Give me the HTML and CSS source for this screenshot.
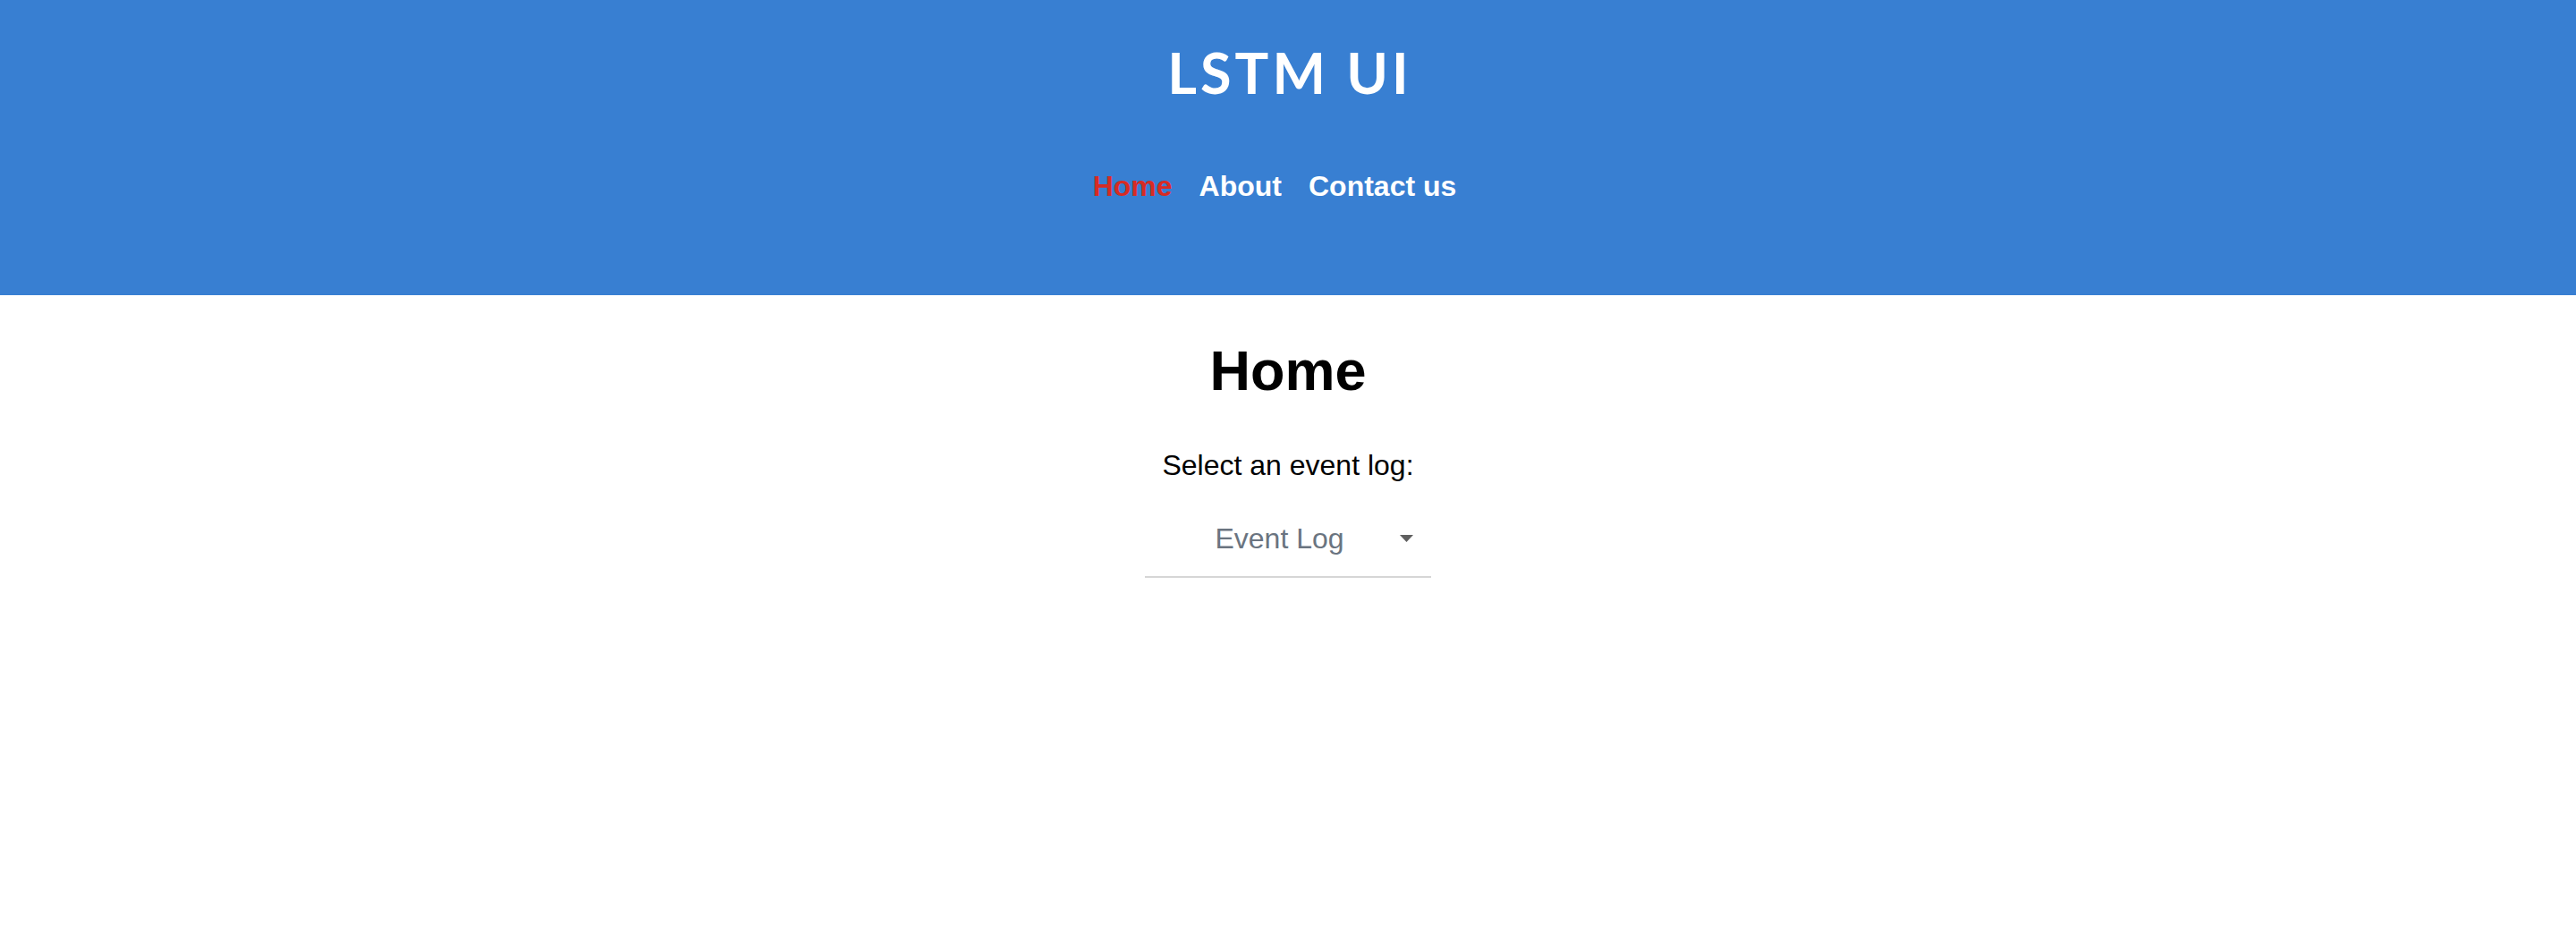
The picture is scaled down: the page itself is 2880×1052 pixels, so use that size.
FILE: index.html
```html
<!DOCTYPE html>
<html lang="en">
<head>
<meta charset="utf-8">
<title>LSTM UI</title>
<link rel="stylesheet" href="styles.css">
</head>
<body>
<header class="site-header">
  <h1 class="site-title">LSTM UI</h1>
  <nav class="site-nav">
    <a class="nav-link active" href="#">Home</a>
    <a class="nav-link" href="#">About</a>
    <a class="nav-link" href="#">Contact us</a>
  </nav>
</header>
<main class="page">
  <h2 class="page-title">Home</h2>
  <p class="select-label">Select an event log:</p>
  <div class="select">
    <span class="select-value">Event Log</span>
    <svg class="select-arrow" width="15" height="8" viewBox="0 0 15 8"><path d="M0 0H15L7.5 8Z" fill="#5f5f5f"/></svg>
  </div>
</main>
</body>
</html>
```
FILE: styles.css
```css
html, body {
  margin: 0;
  padding: 0;
  background: #ffffff;
}
body {
  font-family: "Liberation Sans", Arial, sans-serif;
  color: #000;
}
.site-header {
  background: #387fd2;
  height: 330px;
  box-sizing: border-box;
  padding-top: 43px;
  display: flex;
  flex-direction: column;
  align-items: center;
}
.site-title {
  margin: 0;
  font-family: Lato, "DejaVu Sans", sans-serif;
  font-weight: 700;
  font-size: 63px;
  line-height: 1.2;
  color: #ffffff;
  letter-spacing: 4px;
  padding-left: 4px;
}
.site-nav {
  margin-top: 71px;
  display: flex;
}
.nav-link {
  font-family: "Liberation Sans", Arial, sans-serif;
  font-weight: 700;
  font-size: 32px;
  line-height: 36px;
  color: #ffffff;
  text-decoration: none;
  margin-right: 30px;
}
.nav-link.active {
  color: #d72b24;
}
.page {
  display: flex;
  flex-direction: column;
  align-items: center;
  padding-top: 48px;
}
.page-title {
  margin: 0;
  font-size: 63px;
  font-weight: 700;
  line-height: 72px;
}
.select-label {
  margin: 52px 0 0;
  font-size: 32px;
  line-height: 36px;
}
.select {
  margin-top: 47px;
  width: 320px;
  box-sizing: border-box;
  padding-left: 16px;
  padding-right: 20px;
  padding-bottom: 25px;
  display: flex;
  align-items: center;
  border-bottom: 2px solid #d6d6d6;
  height: 61px;
}
.select-value {
  flex: 1;
  text-align: center;
  font-size: 32px;
  line-height: 36px;
  color: #6a7480;
}
.select-arrow {
  display: block;
}
```
